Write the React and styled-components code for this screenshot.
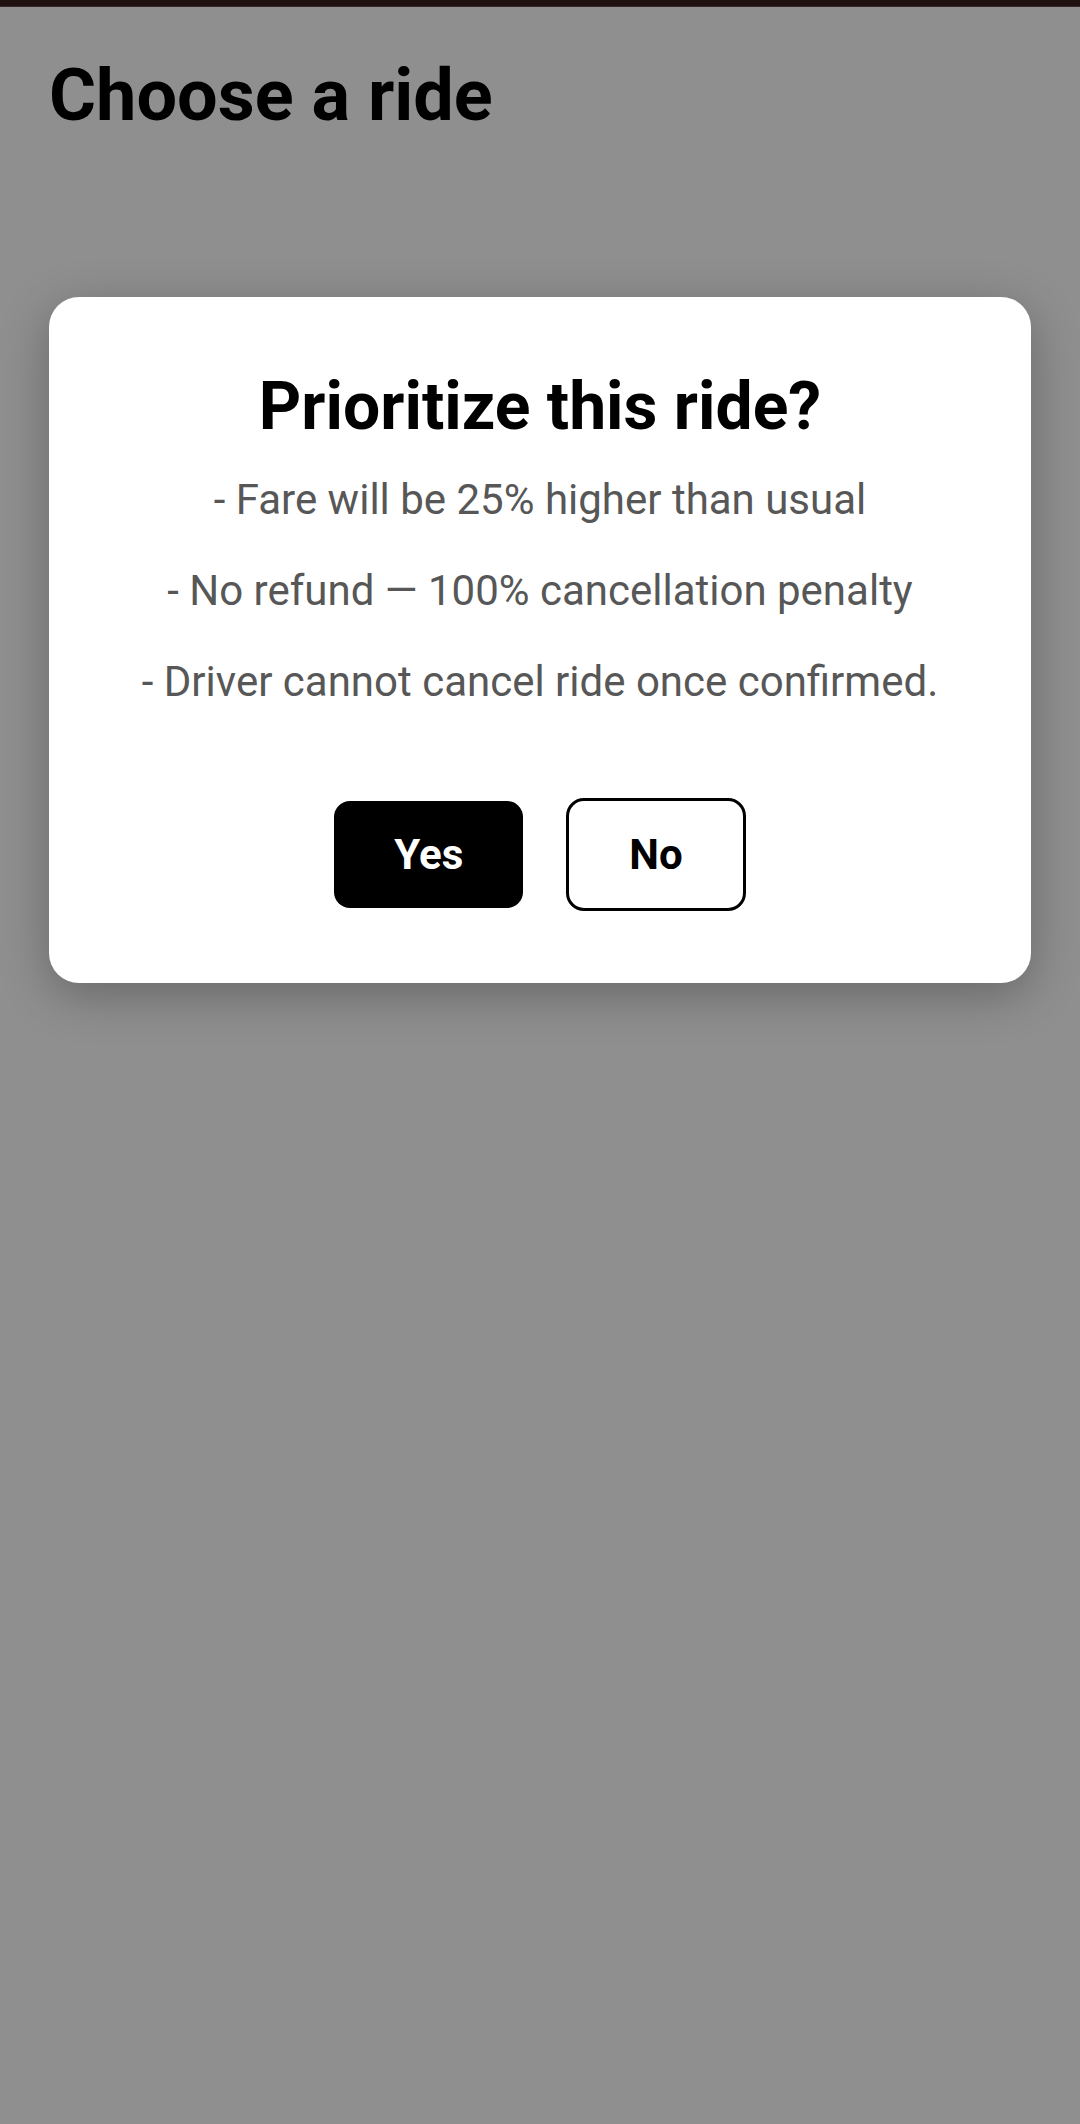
import React from "react";
import styled, { createGlobalStyle } from "styled-components";

const Global = createGlobalStyle`
  html, body { margin: 0; padding: 0; }
  body { background: #ffffff; font-family: Roboto, "Noto Sans", Arial, sans-serif; }
  #root { min-height: 2124px; }
  * { box-sizing: border-box; }
`;

const Screen = styled.div`
  position: relative;
  min-height: 2124px;
  background: #ffffff;
`;

const StatusBar = styled.div`
  height: 7px;
  background: #3a1f1f;
  border-bottom: 1px solid #6a4a4a;
`;

const PageTitle = styled.h1`
  margin: 53px 0 0 49px;
  font-family: Roboto, Arial, sans-serif;
  font-weight: 700;
  font-size: 72px;
  line-height: 1;
  color: #000;
`;

const Overlay = styled.div`
  position: absolute;
  inset: 0;
  background: rgba(0, 0, 0, 0.44);
  display: flex;
  flex-direction: column;
  align-items: center;
  padding: 297px 49px 0;
`;

const Dialog = styled.div`
  width: 100%;
  background: #fff;
  border-radius: 30px;
  box-shadow: 0 12px 48px rgba(0, 0, 0, 0.28);
  padding: 70px 30px 72px;
  display: flex;
  flex-direction: column;
  align-items: center;
  text-align: center;
`;

const DialogTitle = styled.h2`
  margin: 0;
  font-family: Roboto, Arial, sans-serif;
  font-weight: 700;
  font-size: 66px;
  line-height: 79px;
  color: #000;
`;

const Terms = styled.div`
  margin-top: 28px;
  display: flex;
  flex-direction: column;
  gap: 39px;
`;

const Term = styled.p`
  margin: 0;
  font-family: Roboto, Arial, sans-serif;
  font-weight: 400;
  font-size: 42px;
  line-height: 52px;
  color: #575757;
`;

const Actions = styled.div`
  margin-top: 90px;
  display: flex;
  align-items: center;
  gap: 43px;
`;

const Button = styled.button`
  font-family: Roboto, Arial, sans-serif;
  font-weight: 700;
  font-size: 42px;
  line-height: 47px;
  padding: 30px 60px;
  cursor: pointer;
  border-radius: ${(p) => (p.$primary ? "16px" : "18px")};
  border: ${(p) => (p.$primary ? "none" : "3px solid #000")};
  background: ${(p) => (p.$primary ? "#000" : "#fff")};
  color: ${(p) => (p.$primary ? "#fff" : "#000")};
`;

export default function App() {
  return (
    <>
      <Global />
      <Screen>
        <StatusBar />
        <PageTitle>Choose a ride</PageTitle>
        <Overlay>
          <Dialog>
            <DialogTitle>Prioritize this ride?</DialogTitle>
            <Terms>
              <Term>- Fare will be 25% higher than usual</Term>
              <Term>- No refund — 100% cancellation penalty</Term>
              <Term>- Driver cannot cancel ride once confirmed.</Term>
            </Terms>
            <Actions>
              <Button $primary>Yes</Button>
              <Button>No</Button>
            </Actions>
          </Dialog>
        </Overlay>
      </Screen>
    </>
  );
}
